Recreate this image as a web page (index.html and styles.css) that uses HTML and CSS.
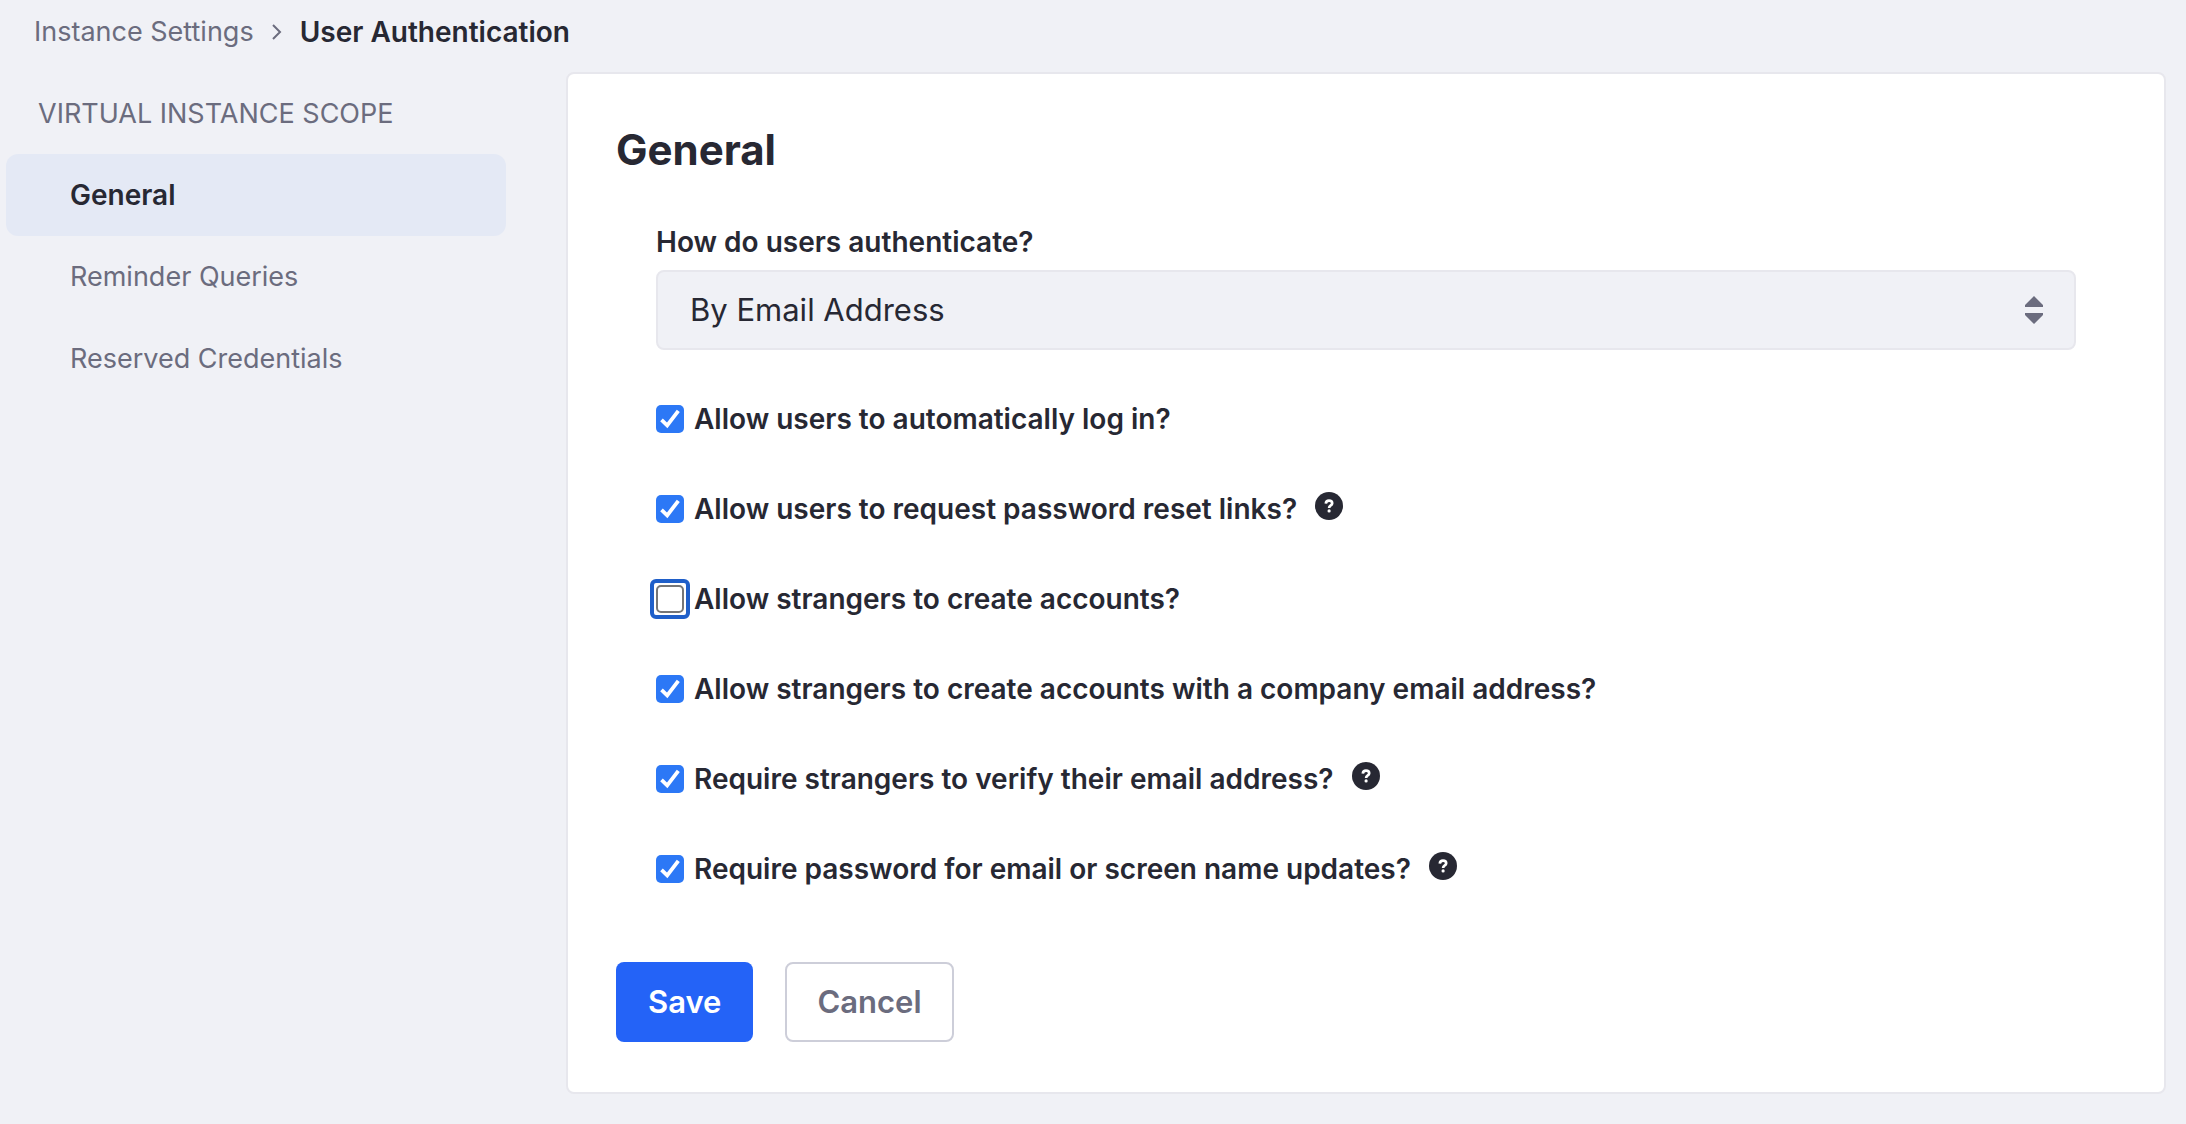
FILE: index.html
```html
<!DOCTYPE html>
<html lang="en">
<head>
<meta charset="utf-8">
<title>User Authentication</title>
<link rel="stylesheet" href="styles.css">
</head>
<body>
<svg class="sprite" aria-hidden="true">
  <symbol id="icon-help" viewBox="0 0 28 28">
    <circle cx="14" cy="14" r="14" fill="currentColor"/>
    <path d="M10.800 11.600c.2-2 1.500-3 3.200-3 1.900 0 3.200 1 3.200 2.600 0 1.200-.7 1.800-1.700 2.400-.9.600-1.300 1-1.300 2v.3" fill="none" stroke="#fff" stroke-width="2.700"/>
    <circle cx="14.100" cy="18.900" r="1.600" fill="#fff"/>
  </symbol>
</svg>
<nav class="breadcrumb" aria-label="Breadcrumb">
  <a class="breadcrumb-link" href="#">Instance Settings</a>
  <svg class="breadcrumb-arrow" viewBox="0 0 10 16" aria-hidden="true"><path d="M1 1l7 7-7 7"/></svg>
  <span class="breadcrumb-current">User Authentication</span>
</nav>
<div class="layout">
  <nav class="sidebar" aria-label="Scope">
    <h2 class="sidebar-title">Virtual Instance Scope</h2>
    <a class="sidebar-link sidebar-link-active" href="#">General</a>
    <a class="sidebar-link" href="#">Reminder Queries</a>
    <a class="sidebar-link" href="#">Reserved Credentials</a>
  </nav>
  <main class="sheet">
    <h1 class="sheet-title">General</h1>
    <form class="form">
      <div class="fields">
        <label class="label" for="auth-type">How do users authenticate?</label>
        <div class="select-wrap">
          <select class="select" id="auth-type"><option>By Email Address</option><option>By Screen Name</option><option>By User ID</option></select>
          <svg class="select-icon" viewBox="0 0 18 28" aria-hidden="true"><path d="M9 0l9 9v2H0V9zM9 28l9-9v-2H0v2z"/></svg>
        </div>
        <div class="checks">
          <div class="check-row">
            <input class="check" type="checkbox" id="auto-login" checked>
            <label class="label" for="auto-login">Allow users to automatically log in?</label>
          </div>
          <div class="check-row">
            <input class="check" type="checkbox" id="reset-links" checked>
            <label class="label" for="reset-links">Allow users to request password reset links?</label>
            <svg class="help"><use href="#icon-help"/></svg>
          </div>
          <div class="check-row">
            <input class="check check-focused" type="checkbox" id="strangers">
            <label class="label" for="strangers">Allow strangers to create accounts?</label>
          </div>
          <div class="check-row">
            <input class="check" type="checkbox" id="strangers-company" checked>
            <label class="label" for="strangers-company">Allow strangers to create accounts with a company email address?</label>
          </div>
          <div class="check-row">
            <input class="check" type="checkbox" id="verify" checked>
            <label class="label" for="verify">Require strangers to verify their email address?</label>
            <svg class="help"><use href="#icon-help"/></svg>
          </div>
          <div class="check-row">
            <input class="check" type="checkbox" id="password-updates" checked>
            <label class="label" for="password-updates">Require password for email or screen name updates?</label>
            <svg class="help"><use href="#icon-help"/></svg>
          </div>
        </div>
      </div>
      <div class="actions">
        <button class="button button-primary" type="button">Save</button>
        <button class="button button-secondary" type="button">Cancel</button>
      </div>
    </form>
  </main>
</div>
</body>
</html>
```
FILE: styles.css
```css
* {
  box-sizing: border-box;
}

body {
  margin: 0;
  background: #f0f1f6;
  color: #272833;
  font-family: Inter, "Liberation Sans", sans-serif;
  font-size: 27px;
  line-height: 32px;
}

.sprite {
  display: none;
}

.breadcrumb {
  display: flex;
  align-items: center;
  gap: 18px;
  padding: 16px 34px 24px;
}

.breadcrumb-link {
  color: #6b6c7e;
  text-decoration: none;
}

.breadcrumb-arrow {
  width: 10px;
  height: 16px;
  fill: none;
  stroke: #6b6c7e;
  stroke-width: 2;
}

.breadcrumb-current {
  font-size: 28px;
  font-weight: 600;
}

.layout {
  display: grid;
  grid-template-columns: 500px 1fr;
  gap: 60px;
  padding: 0 20px 30px 6px;
}

.sidebar-title {
  margin: 0;
  padding: 26px 32px 24px;
  color: #6b6c7e;
  font-size: 27px;
  font-weight: 400;
  text-transform: uppercase;
}

.sidebar-link {
  display: block;
  padding: 25px 64px;
  border-radius: 12px;
  color: #6b6c7e;
  text-decoration: none;
}

.sidebar-link-active {
  background: #e4e9f5;
  color: #272833;
  font-size: 28px;
  font-weight: 600;
}

.sheet {
  padding: 50px 48px;
  border: 2px solid #e7e7ed;
  border-radius: 8px;
  background: #fff;
}

.sheet-title {
  margin: 0 0 50px;
  font-size: 42px;
  font-weight: 700;
  line-height: 52px;
}

.fields {
  padding: 0 40px;
}

.label {
  display: block;
  width: fit-content;
  font-size: 28px;
  font-weight: 600;
}

.select-wrap {
  position: relative;
  margin-top: 12px;
}

.select {
  display: block;
  width: 100%;
  height: 80px;
  padding: 0 32px;
  border: 2px solid #e7e7ed;
  border-radius: 8px;
  background: #f0f1f6;
  color: #272833;
  font: inherit;
  font-size: 31px;
  line-height: 40px;
  appearance: none;
}

.select-icon {
  position: absolute;
  top: 26px;
  right: 33px;
  width: 18px;
  height: 28px;
  fill: #6b6c7e;
  pointer-events: none;
}

.checks {
  display: grid;
  grid-auto-rows: 32px;
  gap: 58px;
  margin-top: 53px;
}

.check-row {
  display: flex;
  align-items: center;
  gap: 10px;
}

.check {
  position: relative;
  width: 28px;
  height: 28px;
  margin: 0;
  border: 2px solid #767676;
  border-radius: 5px;
  background: #fff;
  appearance: none;
}

.check:checked {
  border: 0;
  background: #2c78f6 url("data:image/svg+xml,%3Csvg xmlns='http://www.w3.org/2000/svg' viewBox='0 0 28 28'%3E%3Cpath d='M5.500 14.800l5.700 5.500L22.300 5.800' fill='none' stroke='white' stroke-width='3.800'/%3E%3C/svg%3E");
}

/* Focus ring drawn around the box */
.check-focused::after {
  content: "";
  position: absolute;
  inset: -8px;
  border: 4px solid #1f5fc9;
  border-radius: 6px;
}

.help {
  width: 28px;
  height: 28px;
  margin: 0 8px 6px;
}

.actions {
  display: flex;
  gap: 32px;
  margin-top: 77px;
}

.button {
  height: 80px;
  padding: 0 30px;
  border: 2px solid transparent;
  border-radius: 8px;
  font: inherit;
  font-size: 31px;
  font-weight: 600;
}

.button-primary {
  background: #2463f7;
  color: #fff;
}

.button-secondary {
  border-color: #cdced9;
  background: #fff;
  color: #6b6c7e;
}
```
